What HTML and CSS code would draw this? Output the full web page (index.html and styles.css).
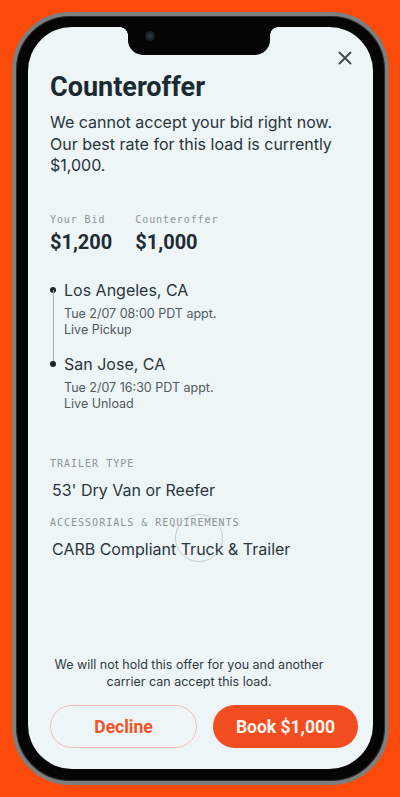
FILE: index.html
```html
<!DOCTYPE html>
<html>
<head>
<meta charset="utf-8">
<link rel="stylesheet" href="styles.css">
</head>
<body>
<div class="phone">
  <div class="screen">
    <div class="notch"><span class="camera"></span></div>
    <div class="topbar">
      <svg class="close" width="14" height="14" viewBox="0 0 14 14"><path d="M1.5 1.5 L12.5 12.5 M12.5 1.5 L1.5 12.5" stroke="#3d474c" stroke-width="1.8" stroke-linecap="round"/></svg>
    </div>
    <div class="content">
      <h1 class="title">Counteroffer</h1>
      <p class="lead">We cannot accept your bid right now. Our best rate for this load is currently $1,000.</p>
      <div class="bids">
        <div class="bid">
          <div class="label">Your Bid</div>
          <div class="amount">$1,200</div>
        </div>
        <div class="bid">
          <div class="label">Counteroffer</div>
          <div class="amount">$1,000</div>
        </div>
      </div>
      <div class="route">
        <div class="stop">
          <div class="city">Los Angeles, CA</div>
          <div class="detail">Tue 2/07 08:00 PDT appt.</div>
          <div class="detail">Live Pickup</div>
        </div>
        <div class="stop last">
          <div class="city">San Jose, CA</div>
          <div class="detail">Tue 2/07 16:30 PDT appt.</div>
          <div class="detail">Live Unload</div>
        </div>
      </div>
      <div class="spec">
        <div class="label caps">TRAILER TYPE</div>
        <div class="value">53' Dry Van or Reefer</div>
      </div>
      <div class="spec spec2">
        <div class="label caps">ACCESSORIALS &amp; REQUIREMENTS</div>
        <div class="value">CARB Compliant Truck &amp; Trailer</div>
        <span class="touch"></span>
      </div>
    </div>
    <div class="footer">
      <p class="note">We will not hold this offer for you and another carrier can accept this load.</p>
      <div class="buttons">
        <button class="btn decline">Decline</button>
        <button class="btn book">Book $1,000</button>
      </div>
    </div>
  </div>
</div>
</body>
</html>
```
FILE: styles.css
```css
* { box-sizing: border-box; }
html, body { margin: 0; padding: 0; }
body {
  width: 400px;
  height: 797px;
  background: #fc4a0b;
  overflow: hidden;
  font-family: Inter, "Noto Sans", sans-serif;
  color: #27343a;
}
.phone {
  margin: 12px 0 0 12px;
  width: 377px;
  height: 773px;
  border-radius: 58px;
  background: #050505;
  border: 4px solid #7e7e7e;
  box-shadow: inset 0 0 0 1px #2a2a2a;
  padding: 11px 12px 12px 12px;
}
.screen {
  position: relative;
  height: 100%;
  background: #eef5f7;
  border-radius: 44px;
  display: flex;
  flex-direction: column;
  padding: 0 15px 21px 22px;
  overflow: hidden;
}
.notch {
  position: absolute;
  left: 100px;
  top: 0;
  width: 142px;
  height: 28px;
  background: #050505;
  border-radius: 0 0 15px 15px;
}
.notch::before, .notch::after {
  content: "";
  position: absolute;
  top: 0;
  width: 8px;
  height: 8px;
}
.notch::before { left: -8px; background: radial-gradient(circle at 0 100%, transparent 7.5px, #050505 8px); }
.notch::after { right: -8px; background: radial-gradient(circle at 100% 100%, transparent 7.5px, #050505 8px); }
.camera {
  position: absolute;
  left: 17px;
  top: 4px;
  width: 10px;
  height: 10px;
  border-radius: 50%;
  background: radial-gradient(circle at 50% 50%, #2c3a48 0, #141a22 70%);
}
.topbar {
  display: flex;
  justify-content: flex-end;
  padding-top: 24px;
  padding-right: 6px;
  height: 38px;
}
.close { display: block; }
.content { flex: 1; }
.title {
  margin: 7px 0 0 0;
  font-family: Roboto, "Liberation Sans", sans-serif;
  font-weight: 700;
  font-size: 27px;
  line-height: 30px;
  color: #1b2a31;
}
.lead {
  margin: 10px 0 0 0;
  font-size: 16px;
  line-height: 21.5px;
  color: #27343a;
  width: 300px;
}
.bids {
  display: flex;
  gap: 23px;
  margin-top: 36px;
}
.label {
  font-family: "DejaVu Sans Mono", "Liberation Mono", monospace;
  font-size: 10px;
  letter-spacing: 0.9px;
  line-height: 14px;
  color: #8b9499;
}
.amount {
  margin-top: 3px;
  font-family: Roboto, "Liberation Sans", sans-serif;
  font-weight: 700;
  font-size: 20px;
  line-height: 24px;
  color: #1f2c33;
}
.route {
  margin-top: 26px;
  position: relative;
}
.stop {
  position: relative;
  padding-left: 14px;
}
.stop::before {
  content: "";
  position: absolute;
  left: 0;
  top: 7px;
  width: 6px;
  height: 6px;
  border-radius: 50%;
  background: #1b262c;
}
.stop:first-child::after {
  content: "";
  position: absolute;
  left: 2.5px;
  top: 10px;
  width: 1px;
  height: 74px;
  background: #a3acb0;
}
.stop.last { margin-top: 15px; }
.city {
  font-size: 16px;
  line-height: 20px;
  color: #2a363c;
}
.detail {
  font-size: 12.5px;
  line-height: 16.5px;
  color: #4f5a5e;
}
.city + .detail { margin-top: 6px; }
.spec { margin-top: 44px; position: relative; }
.spec2 { margin-top: 16px; }
.caps { letter-spacing: 1px; }
.value {
  margin-top: 9px;
  padding-left: 2px;
  font-size: 16px;
  line-height: 20px;
  color: #2a363c;
}
.touch {
  position: absolute;
  left: 125px;
  top: -2px;
  width: 48px;
  height: 48px;
  border-radius: 50%;
  border: 1px solid rgba(150, 160, 165, 0.45);
}
.footer { display: flex; flex-direction: column; }
.note {
  margin: 0 0 15px 0;
  padding-right: 30px;
  text-align: center;
  font-size: 12.5px;
  line-height: 17px;
  color: #2f3a3f;
}
.buttons {
  display: flex;
  gap: 16px;
}
.btn {
  flex: 1;
  height: 43px;
  border-radius: 22px;
  font-family: Roboto, "Liberation Sans", sans-serif;
  font-weight: 700;
  font-size: 17.5px;
  cursor: pointer;
}
.decline {
  background: transparent;
  border: 1.5px solid #f2beae;
  color: #f0532a;
}
.book {
  background: #f14d20;
  border: none;
  color: #fff4ee;
}
```
